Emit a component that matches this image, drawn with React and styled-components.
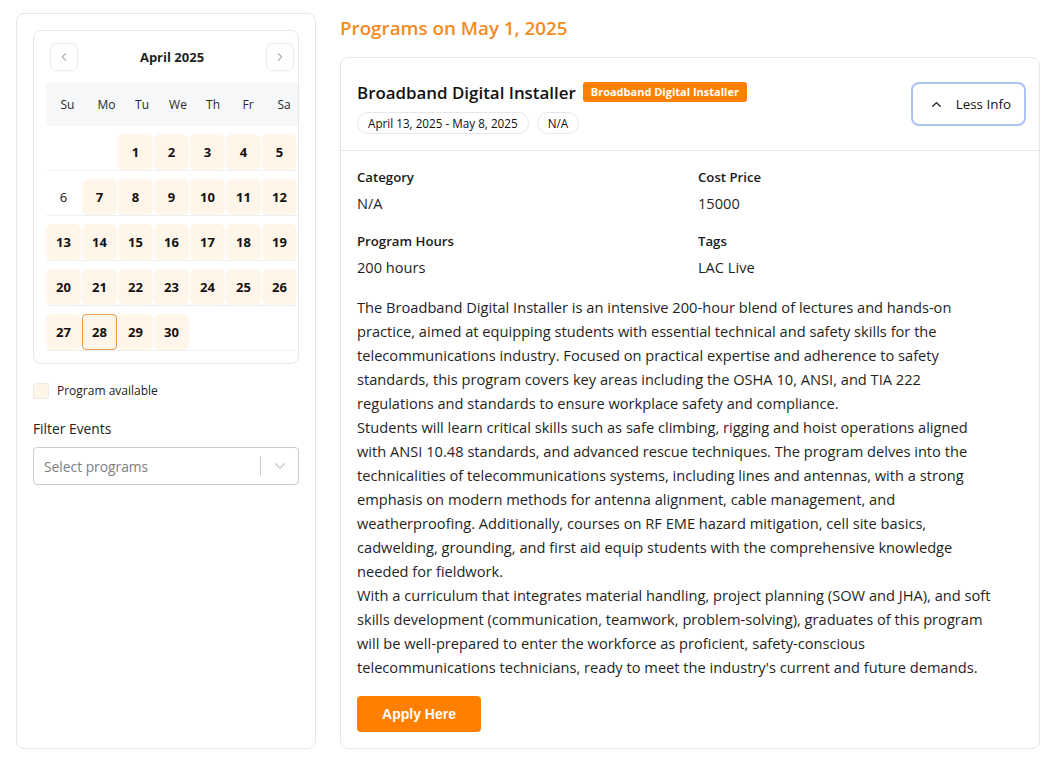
import React from 'react';
import styled, { createGlobalStyle } from 'styled-components';
import { ChevronLeft, ChevronRight, ChevronUp, ChevronDown } from 'lucide-react';

const GlobalStyle = createGlobalStyle`
  * { box-sizing: border-box; }
  body {
    margin: 0;
    background: #fff;
    font-family: "Open Sans", "Noto Sans", sans-serif;
    color: #1f1f1f;
  }
`;

const weekDays = ['Su', 'Mo', 'Tu', 'We', 'Th', 'Fr', 'Sa'];

// April 2025 starts on a Tuesday
const weeks = [
  [null, null, 1, 2, 3, 4, 5],
  [6, 7, 8, 9, 10, 11, 12],
  [13, 14, 15, 16, 17, 18, 19],
  [20, 21, 22, 23, 24, 25, 26],
  [27, 28, 29, 30, null, null, null],
];

const unavailable = [6];
const today = 28;

// paragraphs kept as the lines they wrap into on the original page
const description = [
  [
    'The Broadband Digital Installer is an intensive 200-hour blend of lectures and hands-on',
    'practice, aimed at equipping students with essential technical and safety skills for the',
    'telecommunications industry. Focused on practical expertise and adherence to safety',
    'standards, this program covers key areas including the OSHA 10, ANSI, and TIA 222',
    'regulations and standards to ensure workplace safety and compliance.',
  ],
  [
    'Students will learn critical skills such as safe climbing, rigging and hoist operations aligned',
    'with ANSI 10.48 standards, and advanced rescue techniques. The program delves into the',
    'technicalities of telecommunications systems, including lines and antennas, with a strong',
    'emphasis on modern methods for antenna alignment, cable management, and',
    'weatherproofing. Additionally, courses on RF EME hazard mitigation, cell site basics,',
    'cadwelding, grounding, and first aid equip students with the comprehensive knowledge',
    'needed for fieldwork.',
  ],
  [
    'With a curriculum that integrates material handling, project planning (SOW and JHA), and soft',
    'skills development (communication, teamwork, problem-solving), graduates of this program',
    'will be well-prepared to enter the workforce as proficient, safety-conscious',
    "telecommunications technicians, ready to meet the industry's current and future demands.",
  ],
];

const details = [
  { label: 'Category', value: 'N/A' },
  { label: 'Cost Price', value: '15000' },
  { label: 'Program Hours', value: '200 hours' },
  { label: 'Tags', value: 'LAC Live' },
];

const App = () => {
  return (
    <>
      <GlobalStyle />
      <Page>
        <Sidebar>
          <Calendar>
            <CalendarHeader>
              <NavButton type="button" aria-label="Previous month">
                <ChevronLeft size={14} strokeWidth={1.6} />
              </NavButton>
              <MonthTitle>April 2025</MonthTitle>
              <NavButton type="button" aria-label="Next month">
                <ChevronRight size={14} strokeWidth={1.6} />
              </NavButton>
            </CalendarHeader>
            <WeekHeader>
              {weekDays.map((d) => (
                <WeekDay key={d}>{d}</WeekDay>
              ))}
            </WeekHeader>
            {weeks.map((week, i) => (
              <WeekRow key={i}>
                {week.map((day, j) =>
                  day ? (
                    <DayCell
                      key={j}
                      $available={!unavailable.includes(day)}
                      $today={day === today}
                    >
                      {day}
                    </DayCell>
                  ) : (
                    <EmptyCell key={j} />
                  )
                )}
              </WeekRow>
            ))}
          </Calendar>

          <Legend>
            <LegendSwatch />
            Program available
          </Legend>

          <FilterLabel>Filter Events</FilterLabel>
          <SelectBox>
            <Placeholder>Select programs</Placeholder>
            <SelectDivider />
            <SelectArrow>
              <ChevronDown size={18} strokeWidth={2} />
            </SelectArrow>
          </SelectBox>
        </Sidebar>

        <Main>
          <Heading>Programs on May 1, 2025</Heading>
          <Card>
            <CardHeader>
              <HeaderInfo>
                <TitleRow>
                  <Title>Broadband Digital Installer</Title>
                  <Badge>Broadband Digital Installer</Badge>
                </TitleRow>
                <ChipRow>
                  <Chip>April 13, 2025 - May 8, 2025</Chip>
                  <Chip>N/A</Chip>
                </ChipRow>
              </HeaderInfo>
              <ToggleButton type="button">
                <ChevronUp size={15} strokeWidth={2.2} />
                Less Info
              </ToggleButton>
            </CardHeader>

            <CardBody>
              <DetailGrid>
                {details.map((d) => (
                  <Detail key={d.label}>
                    <DetailLabel>{d.label}</DetailLabel>
                    <DetailValue>{d.value}</DetailValue>
                  </Detail>
                ))}
              </DetailGrid>
              <Description>
                {description.map((para, i) => (
                  <p key={i}>
                    {para.map((line, j) => (
                      <span key={j}>{line}</span>
                    ))}
                  </p>
                ))}
              </Description>
              <ApplyButton type="button">Apply Here</ApplyButton>
            </CardBody>
          </Card>
        </Main>
      </Page>
    </>
  );
};

const Page = styled.div`
  display: flex;
  gap: 24px;
  padding: 13px 8px 12px 16px;
  height: 761px;
`;

const Sidebar = styled.aside`
  width: 300px;
  flex-shrink: 0;
  border: 1px solid #e7e7e9;
  border-radius: 8px;
  padding: 16px;
`;

const Calendar = styled.div`
  border: 1px solid #e5e7eb;
  border-radius: 8px;
  padding: 12px 0 12px 12px;
  overflow: hidden;
`;

const CalendarHeader = styled.div`
  display: flex;
  align-items: center;
  justify-content: space-between;
  padding: 0 4px;
  margin-bottom: 12px;
`;

const NavButton = styled.button`
  width: 28px;
  height: 28px;
  display: flex;
  align-items: center;
  justify-content: center;
  padding: 0;
  background: #fff;
  border: 1px solid #ececef;
  border-radius: 6px;
  color: #777;
`;

const MonthTitle = styled.div`
  font-size: 13px;
  font-weight: 700;
  color: #1f1f1f;
`;

const WeekHeader = styled.div`
  display: grid;
  grid-template-columns: 43px 35px 36px 36px 34px 36px 36px;
  height: 43px;
  align-items: center;
  background: #f5f7f9;
`;

const WeekDay = styled.div`
  text-align: center;
  font-size: 12px;
  color: #2a2a2a;
`;

const WeekRow = styled.div`
  display: grid;
  grid-template-columns: repeat(7, 36px);
  padding-top: 8px;
  border-bottom: 1px solid #eff0f2;
`;

const DayCell = styled.div`
  width: 35px;
  height: 36px;
  display: flex;
  align-items: center;
  justify-content: center;
  font-size: 13px;
  font-weight: ${(p) => (p.$available ? 700 : 400)};
  color: #111;
  background: ${(p) => (p.$available ? '#fff5e9' : 'transparent')};
  border: 1px solid ${(p) => (p.$today ? '#e8994a' : 'transparent')};
  border-radius: ${(p) => (p.$today ? '4px' : '6px')};
`;

const EmptyCell = styled.div`
  height: 36px;
`;

const Legend = styled.div`
  display: flex;
  align-items: center;
  gap: 8px;
  margin-top: 18px;
  font-size: 12px;
  color: #222;
`;

const LegendSwatch = styled.span`
  width: 16px;
  height: 16px;
  border-radius: 2px;
  background: #fff5e9;
  border: 1px solid #f4ebdf;
`;

const FilterLabel = styled.div`
  margin-top: 20px;
  font-size: 13.8px;
  line-height: 20px;
  color: #222;
`;

const SelectBox = styled.div`
  margin-top: 8px;
  height: 38px;
  display: flex;
  align-items: center;
  border: 1px solid #cccccc;
  border-radius: 4px;
  padding-left: 10px;
`;

const Placeholder = styled.span`
  flex: 1;
  font-size: 13.8px;
  color: #808080;
`;

const SelectDivider = styled.span`
  width: 1px;
  align-self: stretch;
  margin: 8px 0;
  background: #cccccc;
`;

const SelectArrow = styled.span`
  width: 37px;
  display: flex;
  justify-content: center;
  color: #cccccc;
`;

const Main = styled.main`
  flex: 1;
  display: flex;
  flex-direction: column;
`;

const Heading = styled.h2`
  margin: 0 0 14px;
  font-size: 18.8px;
  line-height: 30px;
  font-weight: 600;
  color: #f38b1f;
`;

const Card = styled.section`
  flex: 1;
  border: 1px solid #e5e7eb;
  border-radius: 8px;
`;

const CardHeader = styled.div`
  display: flex;
  justify-content: space-between;
  align-items: flex-start;
  padding: 20px 13px 16px 16px;
  border-bottom: 1px solid #e5e7eb;
`;

const HeaderInfo = styled.div`
  display: flex;
  flex-direction: column;
  gap: 6px;
`;

const TitleRow = styled.div`
  display: flex;
  align-items: center;
  gap: 7px;
  height: 28px;
`;

const Title = styled.h3`
  margin: 0;
  font-size: 16.9px;
  font-weight: 600;
  color: #111;
`;

const Badge = styled.span`
  background: #ff7f00;
  color: #fff;
  font-size: 11px;
  font-weight: 700;
  line-height: 20px;
  padding: 0 8px;
  border-radius: 3px;
`;

const ChipRow = styled.div`
  display: flex;
  gap: 8px;
`;

const Chip = styled.span`
  height: 22px;
  display: inline-flex;
  align-items: center;
  padding: 0 10px;
  border: 1px solid #e5e7eb;
  border-radius: 999px;
  font-size: 11.7px;
  font-weight: 500;
  color: #111;
`;

const ToggleButton = styled.button`
  margin-top: 4px;
  height: 44px;
  display: flex;
  align-items: center;
  gap: 12px;
  padding: 0 13px 0 16px;
  background: #fff;
  border: 2px solid #a9c4f1;
  border-radius: 8px;
  font-family: inherit;
  font-size: 13.4px;
  font-weight: 500;
  color: #111;
`;

const CardBody = styled.div`
  padding: 16px 16px 16px;
`;

const DetailGrid = styled.div`
  display: grid;
  grid-template-columns: 1fr 1fr;
  column-gap: 16px;
  row-gap: 16px;
`;

const Detail = styled.div`
  display: flex;
  flex-direction: column;
  gap: 4px;
`;

const DetailLabel = styled.span`
  font-size: 13.2px;
  line-height: 20px;
  font-weight: 600;
  color: #1a1a1a;
`;

const DetailValue = styled.span`
  font-size: 14.6px;
  line-height: 24px;
  color: #1f1f1f;
`;

const Description = styled.div`
  margin-top: 16px;
  font-size: 14.65px;
  line-height: 24px;
  color: #1f1f1f;

  p {
    margin: 0;
  }

  span {
    display: block;
    white-space: nowrap;
  }
`;

const ApplyButton = styled.button`
  margin-top: 17px;
  width: 124px;
  height: 36px;
  border: none;
  border-radius: 4px;
  background: #ff8000;
  color: #fff;
  font-family: "Liberation Sans", Arial, sans-serif;
  font-size: 14px;
  font-weight: 700;
`;

export default App;
